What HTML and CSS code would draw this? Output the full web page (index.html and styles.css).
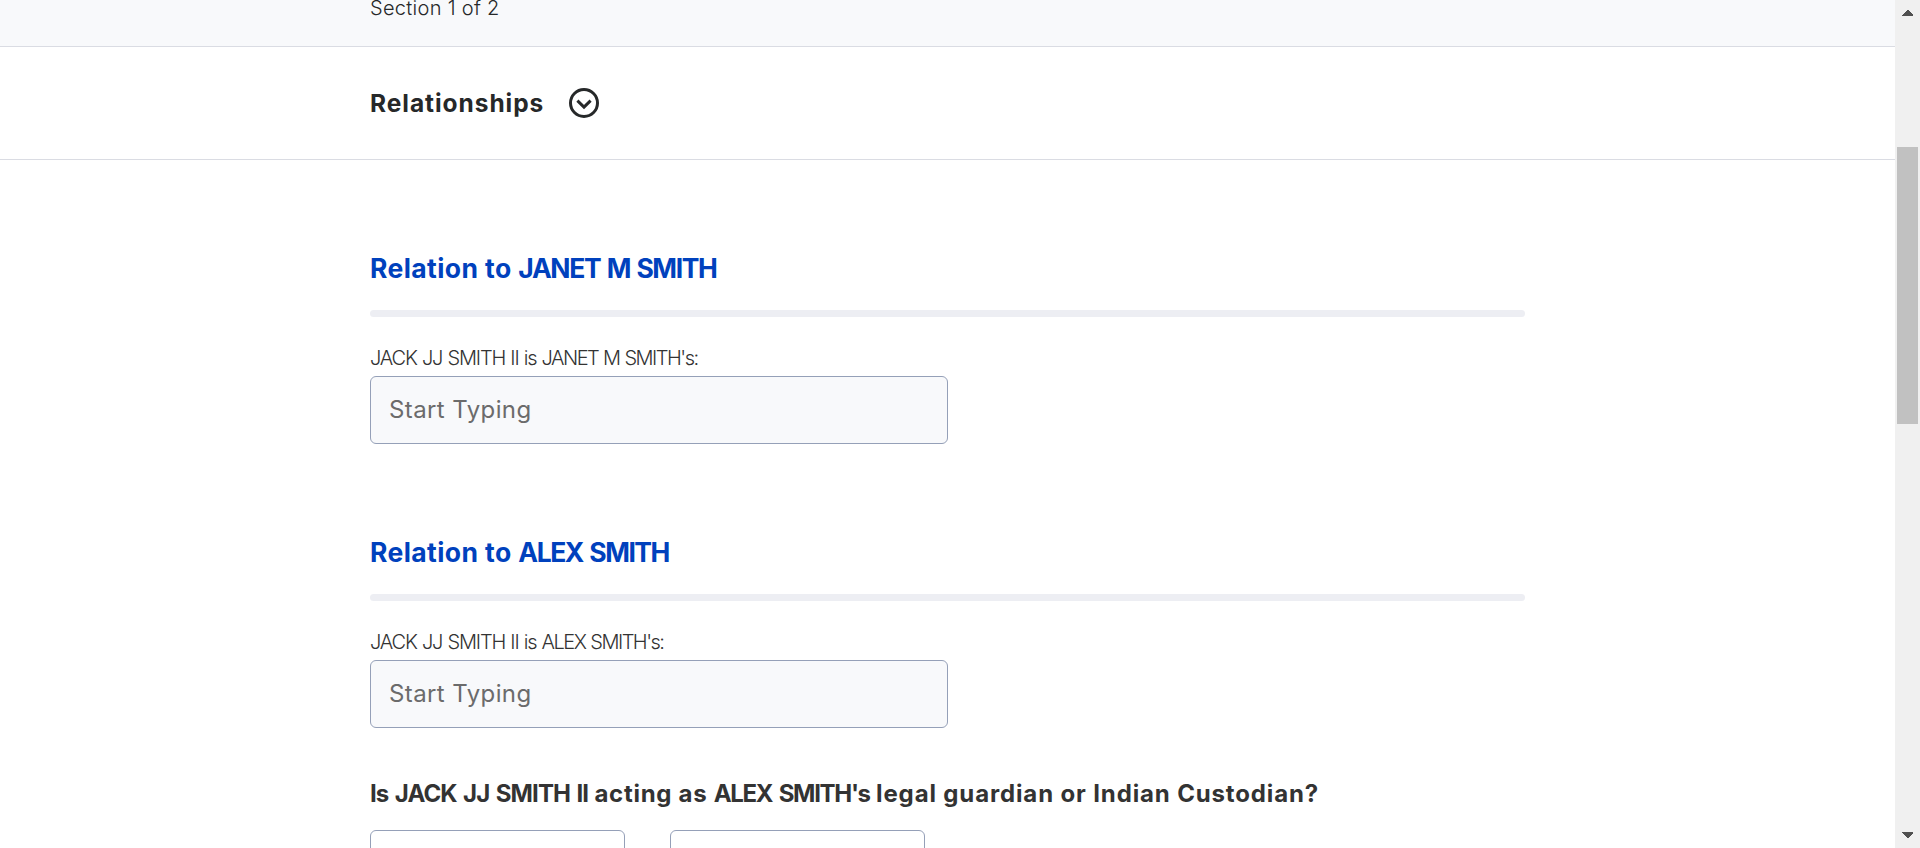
FILE: index.html
```html
<!DOCTYPE html>
<html lang="en">
<head>
<meta charset="utf-8">
<title>Relationships</title>
<link rel="stylesheet" href="styles.css">
</head>
<body>
<div class="window">
  <div class="page">
    <header class="progress"><span class="progress-text">Section 1 of 2</span></header>
    <div class="section-bar">
      <h1 class="section-title">Relationships</h1>
      <svg class="toggle" viewBox="0 0 30 30" fill="none" stroke="#262829">
        <circle cx="15" cy="15" r="13.5" stroke-width="3"/>
        <path d="M8.4 12.7 15 19.1l6.6-6.4" stroke-width="3"/>
      </svg>
    </div>
    <main class="form">
      <section class="relation">
        <h2 class="relation-title">Relation to <span class="name">JANET M SMITH</span></h2>
        <div class="rule"></div>
        <label class="label" for="janet">JACK JJ SMITH II is <span class="name">JANET M SMITH's:</span></label>
        <input class="field" id="janet" placeholder="Start Typing">
      </section>
      <section class="relation">
        <h2 class="relation-title">Relation to <span class="name name-short">ALEX SMITH</span></h2>
        <div class="rule"></div>
        <label class="label" for="alex">JACK JJ SMITH II is <span class="name">ALEX SMITH's:</span></label>
        <input class="field" id="alex" placeholder="Start Typing">
      </section>
      <h3 class="question"><span class="subject">Is JACK JJ SMITH II </span>acting as <span class="name">ALEX SMITH's </span><span class="role">legal guardian or Indian Custodian?</span></h3>
      <div class="choices">
        <div class="choice"></div>
        <div class="choice"></div>
      </div>
    </main>
  </div>
  <div class="scrollbar">
    <svg class="arrow" viewBox="0 0 11 6" shape-rendering="crispEdges"><path d="M0 6V5L5 0h1l5 5v1z" fill="#505050"/></svg>
    <div class="thumb"></div>
    <svg class="arrow" viewBox="0 0 11 6" shape-rendering="crispEdges"><path d="M0 0v1l5 5h1l5-5V0z" fill="#505050"/></svg>
  </div>
</div>
</body>
</html>
```
FILE: styles.css
```css
* { box-sizing: border-box; }
body {
  margin: 0;
  overflow: hidden;
  background: #fff;
  color: #262829;
  font-family: Inter, "Open Sans", sans-serif;
}
h1, h2, h3 { margin: 0; }
.window { display: flex; height: 848px; overflow: hidden; }
.page { flex: 1; height: 848px; overflow: hidden; }
.progress {
  display: flex;
  align-items: flex-start;
  height: 47px;
  padding-left: 370px;
  background: #f8f9fb;
  border-bottom: 1px solid #dadce3;
}
.progress-text {
  font-size: 20px;
  font-weight: 300;
  letter-spacing: 0.3px;
  line-height: 16px;
}
.section-bar {
  display: flex;
  align-items: center;
  height: 113px;
  padding-left: 370px;
  border-bottom: 1px solid #dadce3;
}
.section-title {
  width: 199px;
  font-size: 24.5px;
  font-weight: 700;
  letter-spacing: 0.95px;
  line-height: 36px;
  white-space: nowrap;
}
.toggle { width: 30px; height: 30px; }
.form { width: 1155px; margin-left: 370px; }
.relation { padding-top: 88px; }
.relation-title {
  color: #0041bd;
  font-size: 26.5px;
  font-weight: 700;
  letter-spacing: 0.42px;
  line-height: 40px;
  white-space: nowrap;
}
.relation-title .name { letter-spacing: -1.37px; word-spacing: 1.5px; }
.relation-title .name-short { letter-spacing: -1.46px; }
.rule {
  height: 7px;
  margin: 22px 0 26px;
  border-radius: 4px;
  background: #edeef3;
}
.label {
  display: block;
  margin-bottom: 3px;
  color: #333;
  font-size: 20px;
  font-weight: 300;
  letter-spacing: -1.15px;
  word-spacing: 0.7px;
  line-height: 30px;
  white-space: nowrap;
}
.label .name { letter-spacing: -1.5px; }
.field {
  display: block;
  width: 578px;
  height: 68px;
  padding: 0 18px 2px;
  border: 1px solid #95a0b8;
  border-radius: 6px;
  background: #f8f9fb;
  font-family: inherit;
  font-size: 24px;
  letter-spacing: 0.4px;
  outline: none;
}
.field::placeholder { color: #6b6b6b; opacity: 1; }
.question {
  margin: 48px 0 18px;
  color: #333;
  font-size: 24px;
  font-weight: 700;
  letter-spacing: 0.7px;
  line-height: 36px;
  white-space: nowrap;
}
.question .subject { letter-spacing: -0.87px; word-spacing: 1.5px; }
.question .name { letter-spacing: -1.3px; word-spacing: 2px; }
.question .role { letter-spacing: 0.86px; }
.choices { display: flex; gap: 45px; }
.choice {
  flex: none;
  width: 255px;
  height: 68px;
  border: 1px solid #95a0b8;
  border-radius: 6px;
}
.scrollbar {
  display: flex;
  flex-direction: column;
  align-items: center;
  width: 25px;
  padding: 10px 0;
  background: #f0f0f0;
}
.arrow { width: 11px; height: 6px; }
.thumb {
  width: 21px;
  height: 277px;
  margin: 131px 0 auto;
  background: #c1c1c1;
}
.relation + .relation { padding-top: 88px; }
```
